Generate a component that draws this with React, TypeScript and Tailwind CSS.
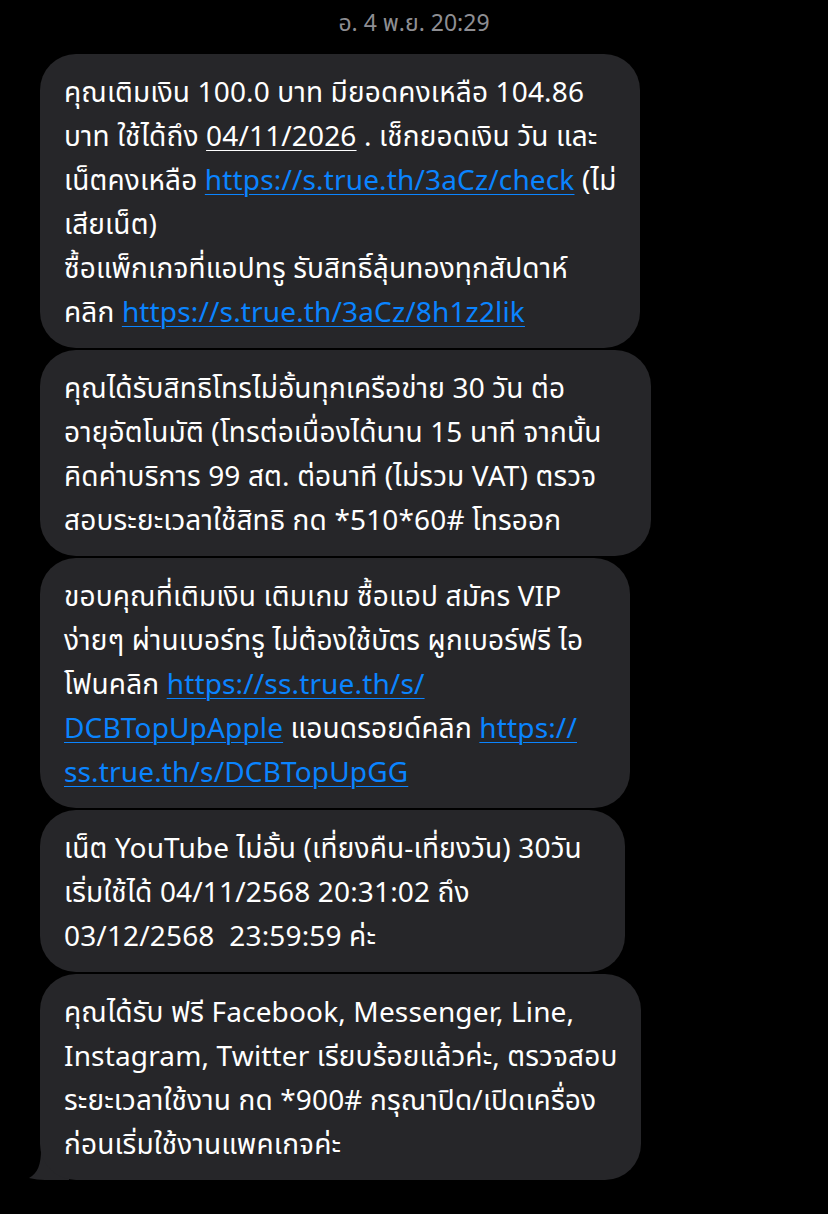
import React from "react";

const L = ({ children }: { children: React.ReactNode }) => (
  <span className="text-[#0a84ff] underline decoration-1 underline-offset-[4px]">{children}</span>
);

const Line = ({ children }: { children: React.ReactNode }) => (
  <div className="whitespace-pre">{children}</div>
);

const Bubble = ({
  w,
  children,
  tail,
}: {
  w: string;
  children: React.ReactNode;
  tail?: boolean;
}) => (
  <div className={`relative ${w}`}>
    {tail && (
      <svg
        className="absolute left-[-11px] bottom-0"
        width="40"
        height="40"
        viewBox="0 0 40 40"
      >
        <path d="M40 0 L40 40 L16 40 C11 40 5 39 0 38 C9 33 12 24 12 10 L12 0 Z" fill="#262629" />
      </svg>
    )}
    <div className="relative rounded-[36px] bg-[#262629] pl-6 pr-4 pt-[15px] pb-[15px] text-[28px] leading-[44px] tracking-[0.15px] text-white">
      {children}
    </div>
  </div>
);

export default function App() {
  return (
    <div
      className="min-h-[1214px] w-[828px] bg-black"
      style={{ fontFamily: '"Noto Sans", "Noto Sans Thai", "Liberation Sans", sans-serif' }}
    >
      <div className="pt-[5px] text-center text-[23px] leading-[34px] text-[#8e8e93]">
        อ. 4 พ.ย. 20:29
      </div>
      <div className="ml-10 mt-[15px] flex flex-col gap-[2px]">
        <Bubble w="w-[600px]">
          <Line>คุณเติมเงิน 100.0 บาท มียอดคงเหลือ 104.86</Line>
          <Line>
            บาท ใช้ได้ถึง <span className="underline decoration-1 underline-offset-[4px]">04/11/2026</span> . เช็กยอดเงิน วัน และ
          </Line>
          <Line>
            เน็ตคงเหลือ <L>https://s.true.th/3aCz/check</L> (ไม่
          </Line>
          <Line>เสียเน็ต)</Line>
          <Line>ซื้อแพ็กเกจที่แอปทรู รับสิทธิ์ลุ้นทองทุกสัปดาห์</Line>
          <Line>
            คลิก <L>https://s.true.th/3aCz/8h1z2lik</L>
          </Line>
        </Bubble>
        <Bubble w="w-[611px]">
          <Line>คุณได้รับสิทธิโทรไม่อั้นทุกเครือข่าย 30 วัน ต่อ</Line>
          <Line>อายุอัตโนมัติ (โทรต่อเนื่องได้นาน 15 นาที จากนั้น</Line>
          <Line>คิดค่าบริการ 99 สต. ต่อนาที (ไม่รวม VAT) ตรวจ</Line>
          <Line>สอบระยะเวลาใช้สิทธิ กด *510*60# โทรออก</Line>
        </Bubble>
        <Bubble w="w-[590px]">
          <Line>ขอบคุณที่เติมเงิน เติมเกม ซื้อแอป สมัคร VIP</Line>
          <Line>ง่ายๆ ผ่านเบอร์ทรู ไม่ต้องใช้บัตร ผูกเบอร์ฟรี ไอ</Line>
          <Line>
            โฟนคลิก <L>https://ss.true.th/s/</L>
          </Line>
          <Line>
            <L>DCBTopUpApple</L> แอนดรอยด์คลิก <L>https://</L>
          </Line>
          <Line>
            <L>ss.true.th/s/DCBTopUpGG</L>
          </Line>
        </Bubble>
        <Bubble w="w-[585px]">
          <Line>เน็ต YouTube ไม่อั้น (เที่ยงคืน-เที่ยงวัน) 30วัน</Line>
          <Line>เริ่มใช้ได้ 04/11/2568 20:31:02 ถึง</Line>
          <Line>03/12/2568  23:59:59 ค่ะ</Line>
        </Bubble>
        <Bubble w="w-[601px]" tail>
          <Line>คุณได้รับ ฟรี Facebook, Messenger, Line,</Line>
          <Line>Instagram, Twitter เรียบร้อยแล้วค่ะ, ตรวจสอบ</Line>
          <Line>ระยะเวลาใช้งาน กด *900# กรุณาปิด/เปิดเครื่อง</Line>
          <Line>ก่อนเริ่มใช้งานแพคเกจค่ะ</Line>
        </Bubble>
      </div>
    </div>
  );
}
